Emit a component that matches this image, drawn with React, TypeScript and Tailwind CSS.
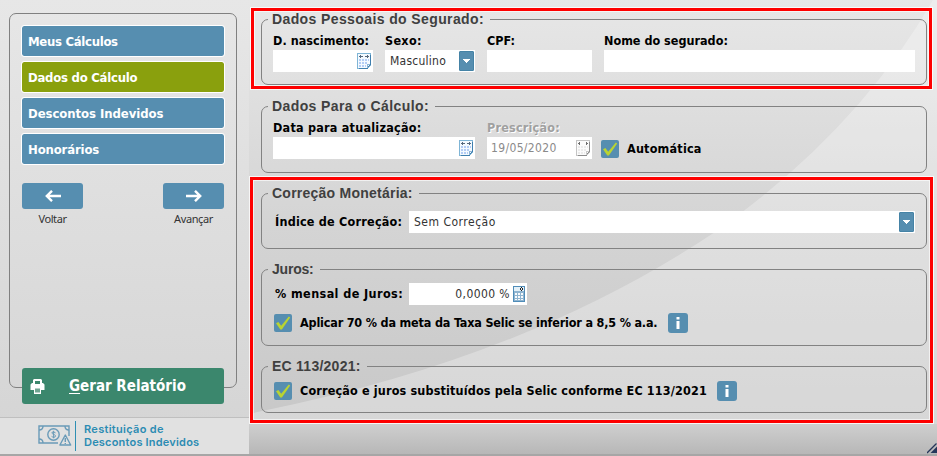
import React from 'react';

interface GroupProps {
  title: string;
  titleClass?: string;
  className?: string;
  children: React.ReactNode;
}

const Group: React.FC<GroupProps> = ({ title, titleClass, className, children }) => (
  <fieldset className={`ml-2 w-[666px] rounded-[7px] border border-[#828282] pl-[6px] ${className}`}>
    <legend
      className={`h-[15px] whitespace-nowrap pl-1 pr-[6px] font-['Liberation_Sans',sans-serif] text-[14px] font-bold leading-[15px] text-[#404040] ${titleClass}`}
    >
      {title}
    </legend>
    {children}
  </fieldset>
);

interface LabelProps {
  className?: string;
  children: React.ReactNode;
}

const Label: React.FC<LabelProps> = ({ className = '', children }) => (
  <span className={`block whitespace-nowrap text-[12.5px] font-bold ${className}`}>{children}</span>
);

const CalendarIcon = ({ muted }: { muted?: boolean }) => (
  <svg width="15" height="16" viewBox="0 0 15 16" shapeRendering="crispEdges">
    <path d="M0 0h14v12l-4 4H0z" fill={muted ? '#c4c4c4' : '#7fb5d6'} />
    <path d="M1 1h12v11l-3 3H1z" fill={muted ? '#fbfbfb' : '#f4faff'} />
    <path d="M13 2h1v10h-1zM12 12h1v1h-1zM11 13h1v1h-1zM10 14h1v1h-1zM2 15h9v1H2z" fill={muted ? '#8c8c8c' : '#3f7fae'} />
    <path d="M10 11h3v1h-2v3h-1z" fill={muted ? '#c9c9c9' : '#8cb3d6'} />
    <path
      d={muted ? 'M2 3h2v1H2zM3 2h1v3H3zM10 3h2v1h-2zM10 2h1v3h-1z' : 'M2 3h4v1H2zM3 2h1v3H3zM8 3h4v1H8zM10 2h1v3h-1z'}
      fill={muted ? '#6f6f6f' : '#56687c'}
    />
    <path
      d="M5 6h2v2H5zM8 6h2v2H8zM11 6h1v2h-1zM2 6h2v2H2zM2 9h2v2H2zM5 9h2v2H5zM8 9h2v2H8zM2 12h2v2H2zM5 12h2v2H5zM8 12h1v2H8z"
      fill={muted ? '#ebebeb' : '#b3cdf6'}
    />
  </svg>
);

const CalculatorIcon = () => (
  <svg width="12" height="16" viewBox="0 0 12 16" shapeRendering="crispEdges">
    <path d="M0 0h12v16H0z" fill="#4f8cb8" />
    <path d="M1 1h10v14H1z" fill="#8fb4d0" />
    <path d="M1 1h10v4H1z" fill="#e3f0f8" />
    <path d="M8 1h1v1H8zM7 2h1v2H7zM9 2h1v2H9zM8 4h1v1H8z" fill="#222" />
    <path d="M2 7h2v2H2zM5 7h2v2H5zM8 7h2v2H8zM2 10h2v2H2zM5 10h2v2H5zM8 10h2v2H8zM2 13h2v1H2zM5 13h2v1H5zM8 13h2v1H8z" fill="#f8fafc" />
  </svg>
);

const DropButton = () => (
  <span className="flex h-5 w-[15px] items-center justify-center rounded-[1px] border border-[#4583a6] bg-[#568eb0]">
    <svg width="7" height="4" viewBox="0 0 7 4" shapeRendering="crispEdges">
      <path d="M0 0h7v1H6v1H5v1H4v1H3V3H2V2H1V1H0z" fill="#fff" />
    </svg>
  </span>
);

const Check = () => (
  <span className="flex h-[18px] w-[18px] shrink-0 items-center justify-center rounded-[2px] bg-[#568eb0]">
    <svg width="18" height="18" viewBox="0 0 18 18">
      <path d="M2 9.2 4.4 8 7.2 11.8 14.8 2.5 16.2 3.4 7.9 15.6 6.3 15.6z" fill="#b9d432" />
    </svg>
  </span>
);

const Info = () => (
  <span className="flex h-5 w-5 shrink-0 items-center justify-center rounded-[3px] bg-[#568eb0]">
    <svg width="4" height="12" viewBox="0 0 4 12">
      <path d="M.5 0h3v2.4h-3zM.5 4h3v8h-3z" fill="#fff" />
    </svg>
  </span>
);

const menu = [
  { text: 'Meus Cálculos', active: false, spacing: 'tracking-[-0.3px]' },
  { text: 'Dados do Cálculo', active: true, spacing: 'tracking-[-0.25px]' },
  { text: 'Descontos Indevidos', active: false, spacing: 'tracking-[-0.06px]' },
  { text: 'Honorários', active: false, spacing: 'tracking-[-0.15px]' },
];

const NavButton = ({ text, back }: { text: string; back?: boolean }) => (
  <div className="flex w-[61px] flex-col items-center">
    <span className="flex h-[26px] w-full items-center justify-center rounded-[3px] bg-[#568eb0]">
      <svg width="16" height="12" viewBox="0 0 16 12" className={back ? '' : 'rotate-180'}>
        <path d="M16 6H1.8M7 .8 1.8 6 7 11.2" fill="none" stroke="#fff" strokeWidth="2.4" />
      </svg>
    </span>
    <span className="mt-[3px] font-['Noto_Sans',sans-serif] text-[11px] leading-[14px] tracking-[-0.4px] text-[#333]">{text}</span>
  </div>
);

const Sidebar = () => (
  <aside className="flex w-[249px] flex-col bg-linear-to-b from-[#e7e7e7] to-[#d4d4d4] pt-[13px]">
    <div className="ml-[9px] h-[375px] w-[228px] rounded-[7px] border border-[#808080] px-3 pt-3">
      <nav className="flex flex-col gap-[6px]">
        {menu.map((item) => (
          <a
            key={item.text}
            className={`flex h-[30px] w-[202px] items-center whitespace-nowrap rounded-[2px] pl-[6px] pt-px text-[13px] font-bold text-white outline outline-1 outline-white ${item.spacing} ${
              item.active ? 'bg-[#8aa00d]' : 'bg-[#568eb0]'
            }`}
          >
            {item.text}
          </a>
        ))}
      </nav>
      <div className="mt-[19px] flex w-[202px] justify-between">
        <NavButton text="Voltar" back />
        <NavButton text="Avançar" />
      </div>
    </div>
    <button className="relative -mt-5 ml-[22px] flex h-9 w-[202px] items-center rounded-[3px] bg-[#3b876d] pl-2 text-white">
      <svg width="15" height="17" viewBox="0 0 15 17">
        <path d="M4 1h7l1 1v3h1l1.500 1.500V12H11v4H4v-4H.5V6.500L2 5h1V2z" fill="#fff" />
        <path d="M5 3h5v3H5z" fill="#3b876d" />
        <path d="M5 10.500h5v4H5z" fill="#6fa592" />
      </svg>
      <span className="ml-6 whitespace-nowrap text-[15px] font-bold">
        <span className="underline underline-offset-2">G</span>erar Relatório
      </span>
    </button>
    <div className="mt-[13px] flex h-[37px] items-center border-t border-[#bfbfbf] bg-[#e1e1e1] pl-[38px]">
      <svg width="34" height="22" viewBox="0 0 34 22" fill="none" stroke="#6a9bb8" strokeWidth="1.4">
        <path d="M20 18H1V1h30v10" />
        <path d="M1 5q4 0 4-4M1 14q4 0 4 4M27 1q0 4 4 4" />
        <circle cx="15.5" cy="9.5" r="5.7" />
        <path d="M17.5 7.8q-2-1.500-3.500-.5c-1 2 3.500 1.800 3.500 3.700 0 1.500-2.400 1.700-3.900.4M15.600 5.800v7.500" strokeWidth="1" />
        <path d="m27.300 10 5.400 10H21.900z" strokeLinejoin="round" />
        <path d="M27.300 13v4M27.300 18v1" />
      </svg>
      <span className="ml-[3px] h-[30px] w-px bg-[#2f8fb3]" />
      <span className="ml-2 whitespace-nowrap font-['Inter',sans-serif] text-[11px] font-semibold leading-[13px] tracking-[0.2px] text-[#2c8cb3]">
        <span className="tracking-[0.3px]">Restituição de</span>
        <br />
        Descontos Indevidos
      </span>
    </div>
  </aside>
);

const Content = () => (
  <main className="relative w-[688px] bg-linear-to-b from-[#e7e7e7] via-[#d4d4d4] via-50% to-[#c6c6c6] pt-2">
    <svg className="absolute left-0 top-0" width="688" height="424" viewBox="0 0 688 424">
      <path d="M684 0Q608 132 466 232Q278 358 13 411L0 414V424H688V0z" fill="#fff" fillOpacity=".28" />
    </svg>
    <div className="relative">
      <div className="ml-[2px] h-[81px] w-[681px] border-[3px] border-[#fe0000] pt-px shadow-[inset_0_0_0_1px_#ffffffa0] outline outline-1 outline-white/80">
        <Group title="Dados Pessoais do Segurado:" titleClass="tracking-[0.39px]" className="-ml-px! h-[73px] translate-x-2">
          <div className="ml-[5px] flex gap-3 pt-[6px]">
            <div className="w-[100px]">
              <Label className="h-[17px] leading-[15px] tracking-[0.05px]">D. nascimento:</Label>
              <div className="flex h-[22px] items-center justify-end bg-white pr-px"><CalendarIcon /></div>
            </div>
            <div className="w-[90px]">
              <Label className="h-[17px] leading-[15px] tracking-[0.3px]">Sexo:</Label>
              <div className="flex h-[22px] items-center justify-between bg-white pl-[5px] pr-px text-[12px] tracking-[0.25px] text-[#333]">
                Masculino
                <DropButton />
              </div>
            </div>
            <div className="w-[105px]">
              <Label className="h-[17px] leading-[15px]">CPF:</Label>
              <div className="h-[22px] bg-white" />
            </div>
            <div className="w-[311px]">
              <Label className="h-[17px] leading-[15px]">Nome do segurado:</Label>
              <div className="h-[22px] bg-white" />
            </div>
          </div>
        </Group>
      </div>

      <div className="mt-[10px] pl-1">
        <Group title="Dados Para o Cálculo:" titleClass="tracking-[0.4px]" className="h-[74px]">
          <div className="ml-[5px] flex pt-[6px]">
            <div className="w-[202px]">
              <Label className="h-[17px] leading-[15px] tracking-[0.23px]">Data para atualização:</Label>
              <div className="flex h-[22px] items-center justify-end bg-white pr-px"><CalendarIcon /></div>
            </div>
            <div className="ml-3 w-[105px]">
              <Label className="h-[17px] leading-[15px] tracking-[0.2px] text-[#a0a0a0] [text-shadow:1px_1px_#fff]">Prescrição:</Label>
              <div className="flex h-[22px] items-center justify-between bg-white pl-1 pr-px text-[12px] tracking-[0.35px] text-[#8a8a8a]">
                19/05/2020
                <CalendarIcon muted />
              </div>
            </div>
            <div className="mb-px ml-[9px] flex h-[18px] items-center gap-2 self-end">
              <Check />
              <Label className="tracking-[0.2px]">Automática</Label>
            </div>
          </div>
        </Group>
      </div>

      <div className="ml-px mt-1 h-[246px] w-[683px] border-[3px] border-[#fe0000] pt-[6px] shadow-[inset_0_0_0_1px_#ffffffa0] outline outline-1 outline-white/80">
        <Group title="Correção Monetária:" titleClass="tracking-[0.24px]" className="h-[63px]">
          <div className="ml-[7px] flex items-center pt-[10px]">
            <Label className="w-[134px] tracking-[0.22px]">Índice de Correção:</Label>
            <div className="flex h-[22px] w-[506px] items-center justify-between bg-white pl-[5px] pr-px text-[12px] tracking-[0.5px] text-[#333]">
              Sem Correção
              <DropButton />
            </div>
          </div>
        </Group>
        <Group title="Juros:" titleClass="tracking-[-0.2px]" className="mt-[13px] h-[84px]">
          <div className="ml-[7px] flex items-center pt-[6px]">
            <Label className="w-[134px] tracking-[0.4px]">% mensal de Juros:</Label>
            <div className="flex h-[22px] w-[118px] items-center justify-end gap-[3px] bg-white pr-[2px] text-[12px] tracking-[0.4px] text-[#333]">
              0,0000 %
              <CalculatorIcon />
            </div>
          </div>
          <div className="ml-[6px] mt-2 flex h-5 items-center">
            <Check />
            <Label className="ml-2 w-[368px] tracking-[-0.18px]">Aplicar 70 % da meta da Taxa Selic se inferior a 8,5 % a.a.</Label>
            <Info />
          </div>
        </Group>
        <Group title="EC 113/2021:" titleClass="tracking-[0.25px]" className="mt-[13px] h-[54px]">
          <div className="ml-[6px] flex h-[27px] items-center pt-[7px]">
            <Check />
            <Label className="ml-2 w-[417px] tracking-[0.15px]">Correção e juros substituídos pela Selic conforme EC 113/2021</Label>
            <Info />
          </div>
        </Group>
      </div>
      <footer className="mt-px flex h-[30px] items-end justify-end bg-linear-to-b from-[#cfcfcf] to-[#b7b7b7]">
        <svg width="10" height="11" viewBox="0 0 10 11">
          <path d="M0 10 9.500 .5" stroke="#26365a" strokeWidth="1.300" />
          <path d="M3.500 10 10 3.500V10z" fill="#26365a" />
        </svg>
      </footer>
    </div>
  </main>
);

export default function App() {
  return (
    <div className="flex h-[456px] w-[937px] flex-col overflow-hidden border-b-2 border-[#a6a6a6] font-['DejaVu_Sans_Condensed','DejaVu_Sans',sans-serif] text-black">
      <div className="flex h-[454px] overflow-hidden">
        <Sidebar />
        <Content />
      </div>
    </div>
  );
}
